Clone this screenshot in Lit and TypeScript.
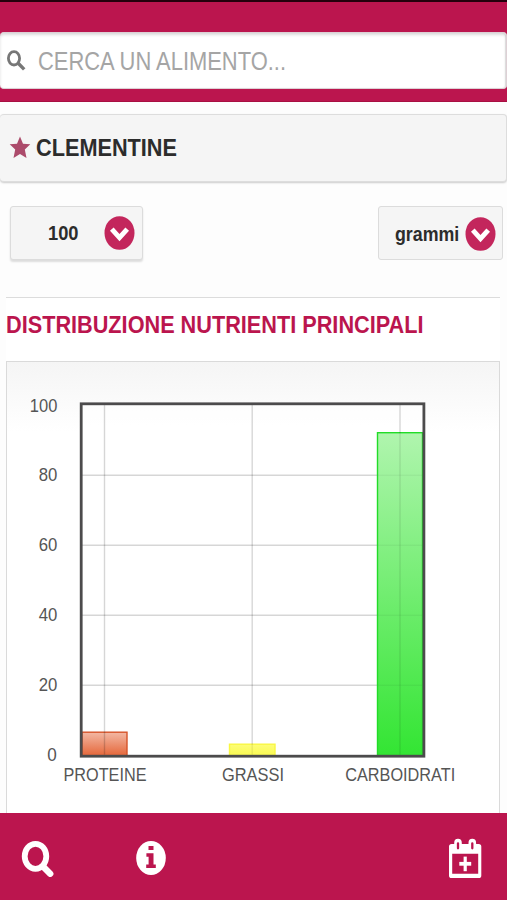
import { LitElement, html, svg, css } from "lit";
import { customElement, property } from "lit/decorators.js";

/** A single line of text condensed to a fixed width. */
@customElement("fit-text")
class FitText extends LitElement {
  @property() text = "";
  @property({ type: Number }) width = 100;
  @property({ type: Number }) size = 20;

  static styles = css`
    :host { display: block; flex: none; }
    svg { display: block; overflow: visible; }
    text { font-family: "Liberation Sans", Arial, sans-serif; font-weight: inherit; fill: currentColor; }
  `;

  render() {
    return html`<svg width=${this.width} height=${this.size}>
      <text x="0" y=${this.size * 0.85} font-size=${this.size}
        textLength=${this.width} lengthAdjust="spacingAndGlyphs">${this.text}</text>
    </svg>`;
  }
}

@customElement("nutrient-chart")
class NutrientChart extends LitElement {
  private ticks = [
    { label: "100", y: 405.7, x: 29.8, w: 27.5 },
    { label: "80", y: 475.5, x: 38.8, w: 18.6 },
    { label: "60", y: 545.5, x: 38.8, w: 18.6 },
    { label: "40", y: 615.5, x: 38.8, w: 18.6 },
    { label: "20", y: 685.5, x: 38.8, w: 18.6 },
    { label: "0", y: 755.5, x: 47.2, w: 9.5 },
  ];
  private bars = [
    { label: "PROTEINE", x: 82, w: 45, y: 732.5, grid: 104.5, tx: 63.5, tw: 83, fill: "url(#protein)", stroke: "#d65329", top: 405, shade: 0.17 },
    { label: "GRASSI", x: 229.5, w: 45.5, y: 744.5, grid: 252.2, tx: 222, tw: 62, fill: "url(#fat)", stroke: "#f9f742", top: 405, shade: 0.08 },
    { label: "CARBOIDRATI", x: 377.5, w: 45, y: 433, grid: 400, tx: 345.2, tw: 110, fill: "url(#carb)", stroke: "#22dc28", top: 405, shade: 0.09 },
  ];

  static styles = css`
    :host { display: block; }
    svg { display: block; }
    text { font-family: "Liberation Sans", Arial, sans-serif; fill: #555; }
    .tick { font-size: 17.8px; }
    .name { font-size: 18.6px; }
    .grid { stroke: #000; stroke-width: 1.4; }
    .frame { fill: none; stroke: #4c4b4c; stroke-width: 2.8; }
  `;

  render() {
    return html`<svg width="492" height="450" viewBox="7 362.3 492 450">
      <defs>
        <linearGradient id="protein" x1="0" y1="0" x2="0" y2="1">
          <stop offset="0" stop-color="#f3b8a4" /><stop offset="1" stop-color="#e5673a" />
        </linearGradient>
        <linearGradient id="fat" x1="0" y1="0" x2="0" y2="1">
          <stop offset="0" stop-color="#fdfd78" /><stop offset="1" stop-color="#fafa50" />
        </linearGradient>
        <linearGradient id="carb" x1="0" y1="0" x2="0" y2="1">
          <stop offset="0" stop-color="#b0f5ae" /><stop offset="1" stop-color="#33e533" />
        </linearGradient>
      </defs>
      <rect x="81" y="404" width="343" height="352" fill="#fff" fill-opacity=".6" />
      ${this.ticks.map((t) => svg`<text class="tick" x=${t.x} y=${t.y + 6.2} textLength=${t.w} lengthAdjust="spacingAndGlyphs">${t.label}</text>`)}
      ${this.ticks.slice(1, 5).map((t) => svg`<line class="grid" stroke-opacity=".16" x1="82" x2="423" y1=${t.y} y2=${t.y} />`)}
      ${this.bars.map((b) => svg`
        <rect x=${b.x} y=${b.y} width=${b.w} height=${756 - b.y} fill=${b.fill} stroke=${b.stroke} stroke-width="1.4" />
        <line class="grid" stroke-opacity=".16" x1=${b.grid} x2=${b.grid} y1=${b.top} y2=${b.y} />
        <line class="grid" stroke-opacity=${b.shade} x1=${b.grid} x2=${b.grid} y1=${b.y} y2="755" />
        <text class="name" x=${b.tx} y="781" textLength=${b.tw} lengthAdjust="spacingAndGlyphs">${b.label}</text>`)}
      ${this.ticks.slice(1, 5).map((t) => svg`<line x1="378" x2="422" y1=${t.y} y2=${t.y} stroke="#000" stroke-opacity=".06" />`)}
      <rect class="frame" x="81.2" y="404.1" width="342.7" height="352.4" />
    </svg>`;
  }
}

@customElement("app-root")
class AppRoot extends LitElement {
  static styles = css`
    :host {
      display: flex; flex-direction: column; width: 507px; height: 900px;
      overflow: hidden; background: #fdfdfd; color: #2c2c2c;
      font-family: "Liberation Sans", Arial, sans-serif;
    }
    * { box-sizing: border-box; }
    svg { display: block; flex: none; }
    .bar { flex: none; height: 102px; background: #bb154e; border-top: 2px solid #25000c; padding-top: 30px; border-bottom: 1px solid #a80f42; }
    .search {
      height: 57px; background: #fff; border-radius: 4px; border: 1px solid #ddd0d5; border-left: 0;
      box-shadow: inset 0 2px 3px rgba(0, 0, 0, .14), inset -1px 0 1px rgba(0, 0, 0, .1);
      display: flex; align-items: center; gap: 11.5px; padding: 1px 0 0 7px; color: #a5a5a5;
    }
    .title {
      flex: none; height: 68px; margin-top: 12px; background: #f5f5f5; border: 1px solid #ddd; border-left: 0;
      border-radius: 4px; box-shadow: 0 1px 2px rgba(0, 0, 0, .2);
      display: flex; align-items: center; gap: 4.5px; padding: 0 0 2px 9px; font-weight: bold;
    }
    .controls { flex: none; display: flex; justify-content: space-between; padding: 24px 4px 0 10px; height: 115px; }
    .select {
      height: 54px; background: #f5f5f5; border: 1px solid #dcdcdc; border-radius: 3px;
      display: flex; align-items: center; justify-content: flex-end; font-weight: bold;
    }
    .amount { width: 133px; padding-right: 7px; gap: 25.5px; box-shadow: 0 2px 2px rgba(0, 0, 0, .13); }
    .unit { width: 125px; padding: 1px 6px 0 0; gap: 6px; }
    .section { flex: none; height: 64px; margin: 0 7px 0 6px; border-top: 1.5px solid #dcdcdc; padding-top: 13.8px; background: #fff; color: #bb154e; font-weight: bold; }
    .panel {
      flex: none; height: 452px; margin: 0 7px 0 6px; border: 1px solid #dadada; border-bottom: 0;
      background: linear-gradient(#f5f5f5, #fff 70px);
    }
    .footer { flex: none; height: 87px; background: #bb154e; display: flex; align-items: center; padding: 3px 25px 0 21px; }
    .info { margin-left: 82px; }
    .add { margin-left: auto; }
  `;

  private chevron = () => html`<svg width="31" height="34" viewBox="0 0 31 34">
    <ellipse cx="15.5" cy="17" rx="15" ry="16.8" fill="#c3265c" />
    <path d="M7.8 13.2L15.5 21.7L23.2 13.2" fill="none" stroke="#fff" stroke-width="4.9" />
  </svg>`;

  render() {
    return html`
      <div class="bar">
        <div class="search">
          <svg width="19" height="22" viewBox="0 0 19 22" fill="none" stroke="#777">
            <ellipse cx="7" cy="8.3" rx="5.6" ry="6.7" stroke-width="2.8" />
            <path d="M11.2 13.2L17.2 19.4" stroke-width="3.4" />
          </svg>
          <fit-text text="CERCA UN ALIMENTO..." .width=${248} .size=${25}></fit-text>
        </div>
      </div>
      <div class="title">
        <svg width="22" height="23" viewBox="0 0 22 23"><path d="M11 .5L14 7.7L21.3 8.3L15.8 13.4L17.5 22L11 18L4.5 22L6.2 13.4L.7 8.3L8 7.7Z" fill="#ac4b6b" /></svg>
        <fit-text text="CLEMENTINE" .width=${141} .size=${24.6}></fit-text>
      </div>
      <div class="controls">
        <div class="select amount"><fit-text text="100" .width=${30.5} .size=${20.4}></fit-text>${this.chevron()}</div>
        <div class="select unit"><fit-text text="grammi" .width=${64.3} .size=${20}></fit-text>${this.chevron()}</div>
      </div>
      <div class="section"><fit-text text="DISTRIBUZIONE NUTRIENTI PRINCIPALI" .width=${417.5} .size=${24.6}></fit-text></div>
      <div class="panel"><nutrient-chart></nutrient-chart></div>
      <div class="footer">
        <svg width="33" height="38" viewBox="0 0 33 38" fill="none" stroke="#fff">
          <ellipse cx="14.5" cy="17.3" rx="10.8" ry="12.5" stroke-width="5.8" />
          <path d="M22 27.5L29.2 34.8" stroke-width="6.4" stroke-linecap="round" />
        </svg>
        <svg class="info" width="30" height="34" viewBox="0 0 30 34">
          <ellipse cx="15" cy="17" rx="14.8" ry="17" fill="#fff" />
          <path d="M12.5 5h5v4h-5zM10.4 12.3h7.1v11.2h2.3v3.5h-9.6v-3.5h2.4v-7.7h-2.2z" fill="#bb154e" />
        </svg>
        <svg class="add" width="33" height="41" viewBox="0 0 33 41">
          <path fill="#fff" fill-rule="evenodd" d="M2.6 6H5.2V5a3.8 4.2 0 0 1 7.6 0v1h6.7V5a3.8 4.2 0 0 1 7.6 0v1h2.6a2.6 2.6 0 0 1 2.6 2.6v28.8a2.6 2.6 0 0 1-2.6 2.6H2.6a2.6 2.6 0 0 1-2.6-2.6V8.6a2.6 2.6 0 0 1 2.6-2.6zM3.2 15.8v20h26v-20z" />
          <path d="M9 5.3v5M23.3 5.3v5" stroke="#bb154e" stroke-width="2.3" stroke-linecap="round" fill="none" />
          <path d="M16.2 18.6v14.6" stroke="#fff" stroke-width="3.2" fill="none" />
          <path d="M10.3 25.8h11.9" stroke="#fff" stroke-width="3.8" fill="none" />
        </svg>
      </div>`;
  }
}
